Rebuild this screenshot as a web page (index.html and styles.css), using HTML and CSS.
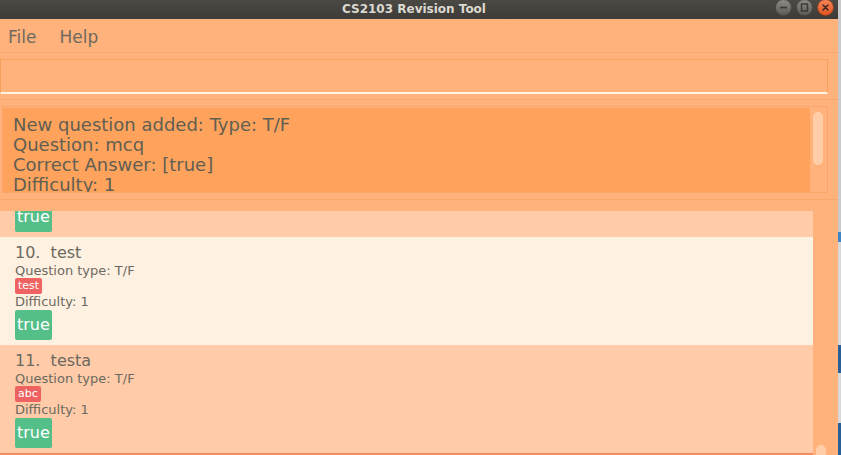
FILE: index.html
```html
<!DOCTYPE html>
<html>
<head>
<meta charset="utf-8">
<link rel="stylesheet" href="styles.css">
</head>
<body>
<div class="screen">
  <div class="window">
    <div class="titlebar">
      <div class="tb-spacer"></div>
      <div class="tb-title">CS2103 Revision Tool</div>
      <div class="tb-buttons">
        <svg class="tb-btn" width="17" height="17" viewBox="0 0 17 17">
          <defs>
            <linearGradient id="g1" x1="0" y1="0" x2="0" y2="1">
              <stop offset="0" stop-color="#8c8b85"/>
              <stop offset="1" stop-color="#5c5b56"/>
            </linearGradient>
            <linearGradient id="g2" x1="0" y1="0" x2="0" y2="1">
              <stop offset="0" stop-color="#f8875a"/>
              <stop offset="1" stop-color="#e2521f"/>
            </linearGradient>
          </defs>
          <circle cx="8.5" cy="8.5" r="8" fill="url(#g1)" stroke="#46453f" stroke-width="0.8"/>
          <rect x="5" y="7.8" width="7" height="1.6" fill="#3b3a36"/>
        </svg>
        <svg class="tb-btn" width="17" height="17" viewBox="0 0 17 17">
          <circle cx="8.5" cy="8.5" r="8" fill="url(#g1)" stroke="#46453f" stroke-width="0.8"/>
          <rect x="5.5" y="5" width="6" height="7" fill="none" stroke="#3b3a36" stroke-width="1.4"/>
        </svg>
        <svg class="tb-btn" width="17" height="17" viewBox="0 0 17 17">
          <circle cx="8.5" cy="8.5" r="8" fill="url(#g2)" stroke="#8a3c1c" stroke-width="0.8"/>
          <path d="M6 6 L11 11 M11 6 L6 11" stroke="#3a2a22" stroke-width="1.5" stroke-linecap="round"/>
        </svg>
      </div>
    </div>

    <div class="menubar">
      <span class="menu-item">File</span>
      <span class="menu-item">Help</span>
    </div>

    <div class="cmd-wrap">
      <div class="cmd-box"></div>
    </div>

    <div class="result-wrap">
      <div class="result-box">
        <div class="result-text">
          <div>New question added: Type: T/F</div>
          <div>Question: mcq</div>
          <div>Correct Answer: [true]</div>
          <div>Difficulty: 1</div>
        </div>
        <div class="result-scroll"><div class="result-thumb"></div></div>
      </div>
    </div>

    <div class="list-wrap">
      <div class="list-view">
        <div class="list-inner">
          <div class="card odd">
            <div class="card-title">9.  tf</div>
            <div class="card-type">Question type: T/F</div>
            <div class="tags"><span class="tag">tf</span></div>
            <div class="card-diff">Difficulty: 1</div>
            <div class="answers"><span class="answer">true</span></div>
          </div>
          <div class="card even">
            <div class="card-title">10.  test</div>
            <div class="card-type">Question type: T/F</div>
            <div class="tags"><span class="tag">test</span></div>
            <div class="card-diff">Difficulty: 1</div>
            <div class="answers"><span class="answer">true</span></div>
          </div>
          <div class="card odd">
            <div class="card-title">11.  testa</div>
            <div class="card-type">Question type: T/F</div>
            <div class="tags"><span class="tag">abc</span></div>
            <div class="card-diff">Difficulty: 1</div>
            <div class="answers"><span class="answer">true</span></div>
          </div>
        </div>
      </div>
      <div class="list-scroll"><div class="list-thumb"></div></div>
    </div>
  </div>
  <div class="desk-strip"></div>
</div>
</body>
</html>
```
FILE: styles.css
```css
html, body {
  margin: 0;
  padding: 0;
}
body {
  width: 841px;
  height: 455px;
  overflow: hidden;
  font-family: "DejaVu Sans", "Liberation Sans", sans-serif;
}
.screen {
  display: flex;
  width: 841px;
  height: 455px;
  overflow: hidden;
}
.window {
  width: 838px;
  height: 455px;
  display: flex;
  flex-direction: column;
  background: #ffb27b;
  overflow: hidden;
}
.desk-strip {
  width: 3px;
  height: 455px;
  background: linear-gradient(to bottom,
    #c9c9c9 0, #c9c9c9 232px,
    #3d84c4 232px, #3d84c4 242px,
    #d8d8d8 242px, #d8d8d8 345px,
    #2b5f98 345px, #2b5f98 373px,
    #d8d8d8 373px, #d8d8d8 423px,
    #2b5f98 423px, #2b5f98 455px);
}

/* title bar */
.titlebar {
  height: 19px;
  flex: none;
  display: grid;
  grid-template-columns: 1fr auto 1fr;
  align-items: center;
  background: linear-gradient(to bottom, #4a4944, #3c3b37);
}
.tb-title {
  margin-right: 10px;
  font-family: "DejaVu Sans", sans-serif;
  font-weight: bold;
  font-size: 12px;
  color: #dcd9d0;
  line-height: 19px;
}
.tb-buttons {
  justify-self: end;
  align-self: start;
  display: flex;
  gap: 4px;
  padding-right: 4px;
  margin-top: -1px;
}
.tb-btn {
  display: block;
}

/* menu bar */
.menubar {
  height: 33px;
  flex: none;
  display: flex;
  gap: 23px;
  padding-left: 8px;
  border-bottom: 1px solid #f8a76d;
  align-items: center;
}
.menu-item {
  font-size: 17px;
  line-height: 33px;
  color: #6e6a5f;
  padding-top: 3px;
}

/* command box */
.cmd-wrap {
  flex: none;
  padding: 6px 10px 5px 0;
  border-bottom: 1px solid #f8a76d;
}
.cmd-box {
  height: 32px;
  border: 1px solid #f7a05a;
  border-bottom: 2px solid #fff3e4;
  background: #ffb27b;
}

/* result display */
.result-wrap {
  flex: none;
  padding: 6px 10px 6px 2px;
  border-bottom: 1px solid #f8a76d;
}
.result-box {
  height: 84px;
  border: 1px solid #f9a66a;
  padding-top: 1px;
  display: flex;
}
.result-text {
  width: 797px;
  height: 77px;
  padding: 7px 0 0 10px;
  background: #ffa35c;
  overflow: hidden;
  font-size: 18px;
  line-height: 20px;
  color: #615e52;
}
.result-scroll {
  flex: 1;
  padding: 4px 0 0 3px;
}
.result-thumb {
  width: 10px;
  height: 53px;
  border-radius: 5px;
  background: #ffcea8;
}

/* list */
.list-wrap {
  flex: 1;
  display: flex;
  padding-top: 11px;
  min-height: 0;
}
.list-view {
  width: 813px;
  height: 242px;
  overflow: hidden;
  border-bottom: 2px solid #f78c5c;
}
.list-inner {
  margin-top: -82px;
}
.list-scroll {
  flex: 1;
  display: flex;
  flex-direction: column;
  justify-content: flex-end;
  padding-left: 3px;
  overflow: hidden;
}
.list-thumb {
  width: 10px;
  height: 14px;
  margin-bottom: -4px;
  border-radius: 5px;
  background: #ffcea8;
}

.card {
  height: 97px;
  padding: 6px 0 5px 15px;
  color: #6c6960;
}
.card.odd {
  background: #ffcba8;
}
.card.even {
  background: #fff1e2;
}
.card-title {
  font-size: 16px;
  line-height: 20px;
  white-space: pre;
}
.card-type,
.card-diff {
  font-size: 13px;
  line-height: 15px;
}
.tags {
  display: flex;
  height: 16px;
}
.tag {
  background: #ee6262;
  color: #ffffff;
  font-size: 11px;
  line-height: 16px;
  padding: 0 3px;
  border-radius: 2px;
}
.answers {
  display: flex;
  margin-top: 1px;
}
.answer {
  background: #55bf8a;
  color: #ffffff;
  font-size: 16px;
  line-height: 30px;
  padding: 0 2px;
  border-radius: 2px;
}
```
